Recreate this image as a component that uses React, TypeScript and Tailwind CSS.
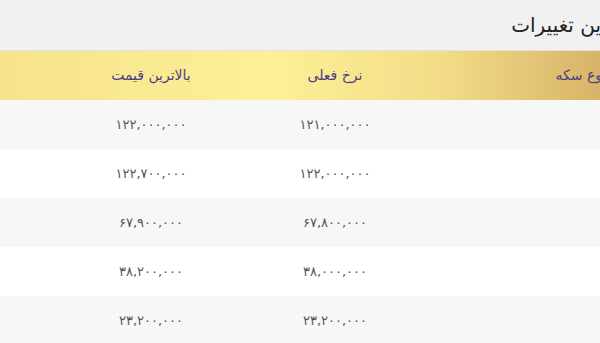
export default function App() {
  const rows = [
    { rate: '۱۲۱,۰۰۰,۰۰۰', high: '۱۲۲,۰۰۰,۰۰۰' },
    { rate: '۱۲۲,۰۰۰,۰۰۰', high: '۱۲۲,۷۰۰,۰۰۰' },
    { rate: '۶۷,۸۰۰,۰۰۰', high: '۶۷,۹۰۰,۰۰۰' },
    { rate: '۳۸,۰۰۰,۰۰۰', high: '۳۸,۲۰۰,۰۰۰' },
    { rate: '۲۳,۲۰۰,۰۰۰', high: '۲۳,۲۰۰,۰۰۰' },
  ];

  return (
    <div dir="ltr" className="w-[600px] h-[343px] overflow-hidden bg-white font-['DejaVu_Sans',sans-serif]">
      <div dir="rtl" className="w-[730px]">
        {/* عنوان */}
        <div className="h-[51px] bg-[#f1f1f1] border-b border-[#e2e2e2] flex items-center pr-[100px]">
          <h2 className="text-[20px] text-[#222] leading-none">آخرین تغییرات</h2>
        </div>

        {/* سرستون‌ها */}
        <div className="grid grid-cols-[298px_194px_174px_64px] h-[49px] items-center text-[14px] text-[#4a3d86] bg-[linear-gradient(to_right,#f6e38c_0%,#fdf097_37%,#f3dd88_60%,#d8b468_82%,#cfa65d_100%)]">
          <div className="text-center">نوع سکه</div>
          <div className="text-center whitespace-nowrap">نرخ فعلی</div>
          <div className="text-center whitespace-nowrap">بالاترین قیمت</div>
          <div />
        </div>

        {rows.map((r, i) => (
          <div
            key={i}
            className={`grid grid-cols-[298px_194px_174px_64px] h-[49px] items-center text-[13px] text-[#555] tracking-wide ${i % 2 === 0 ? 'bg-[#f7f7f7]' : 'bg-white'}`}
          >
            <div />
            <div className="text-center">{r.rate}</div>
            <div className="text-center">{r.high}</div>
            <div />
          </div>
        ))}
      </div>
    </div>
  );
}
